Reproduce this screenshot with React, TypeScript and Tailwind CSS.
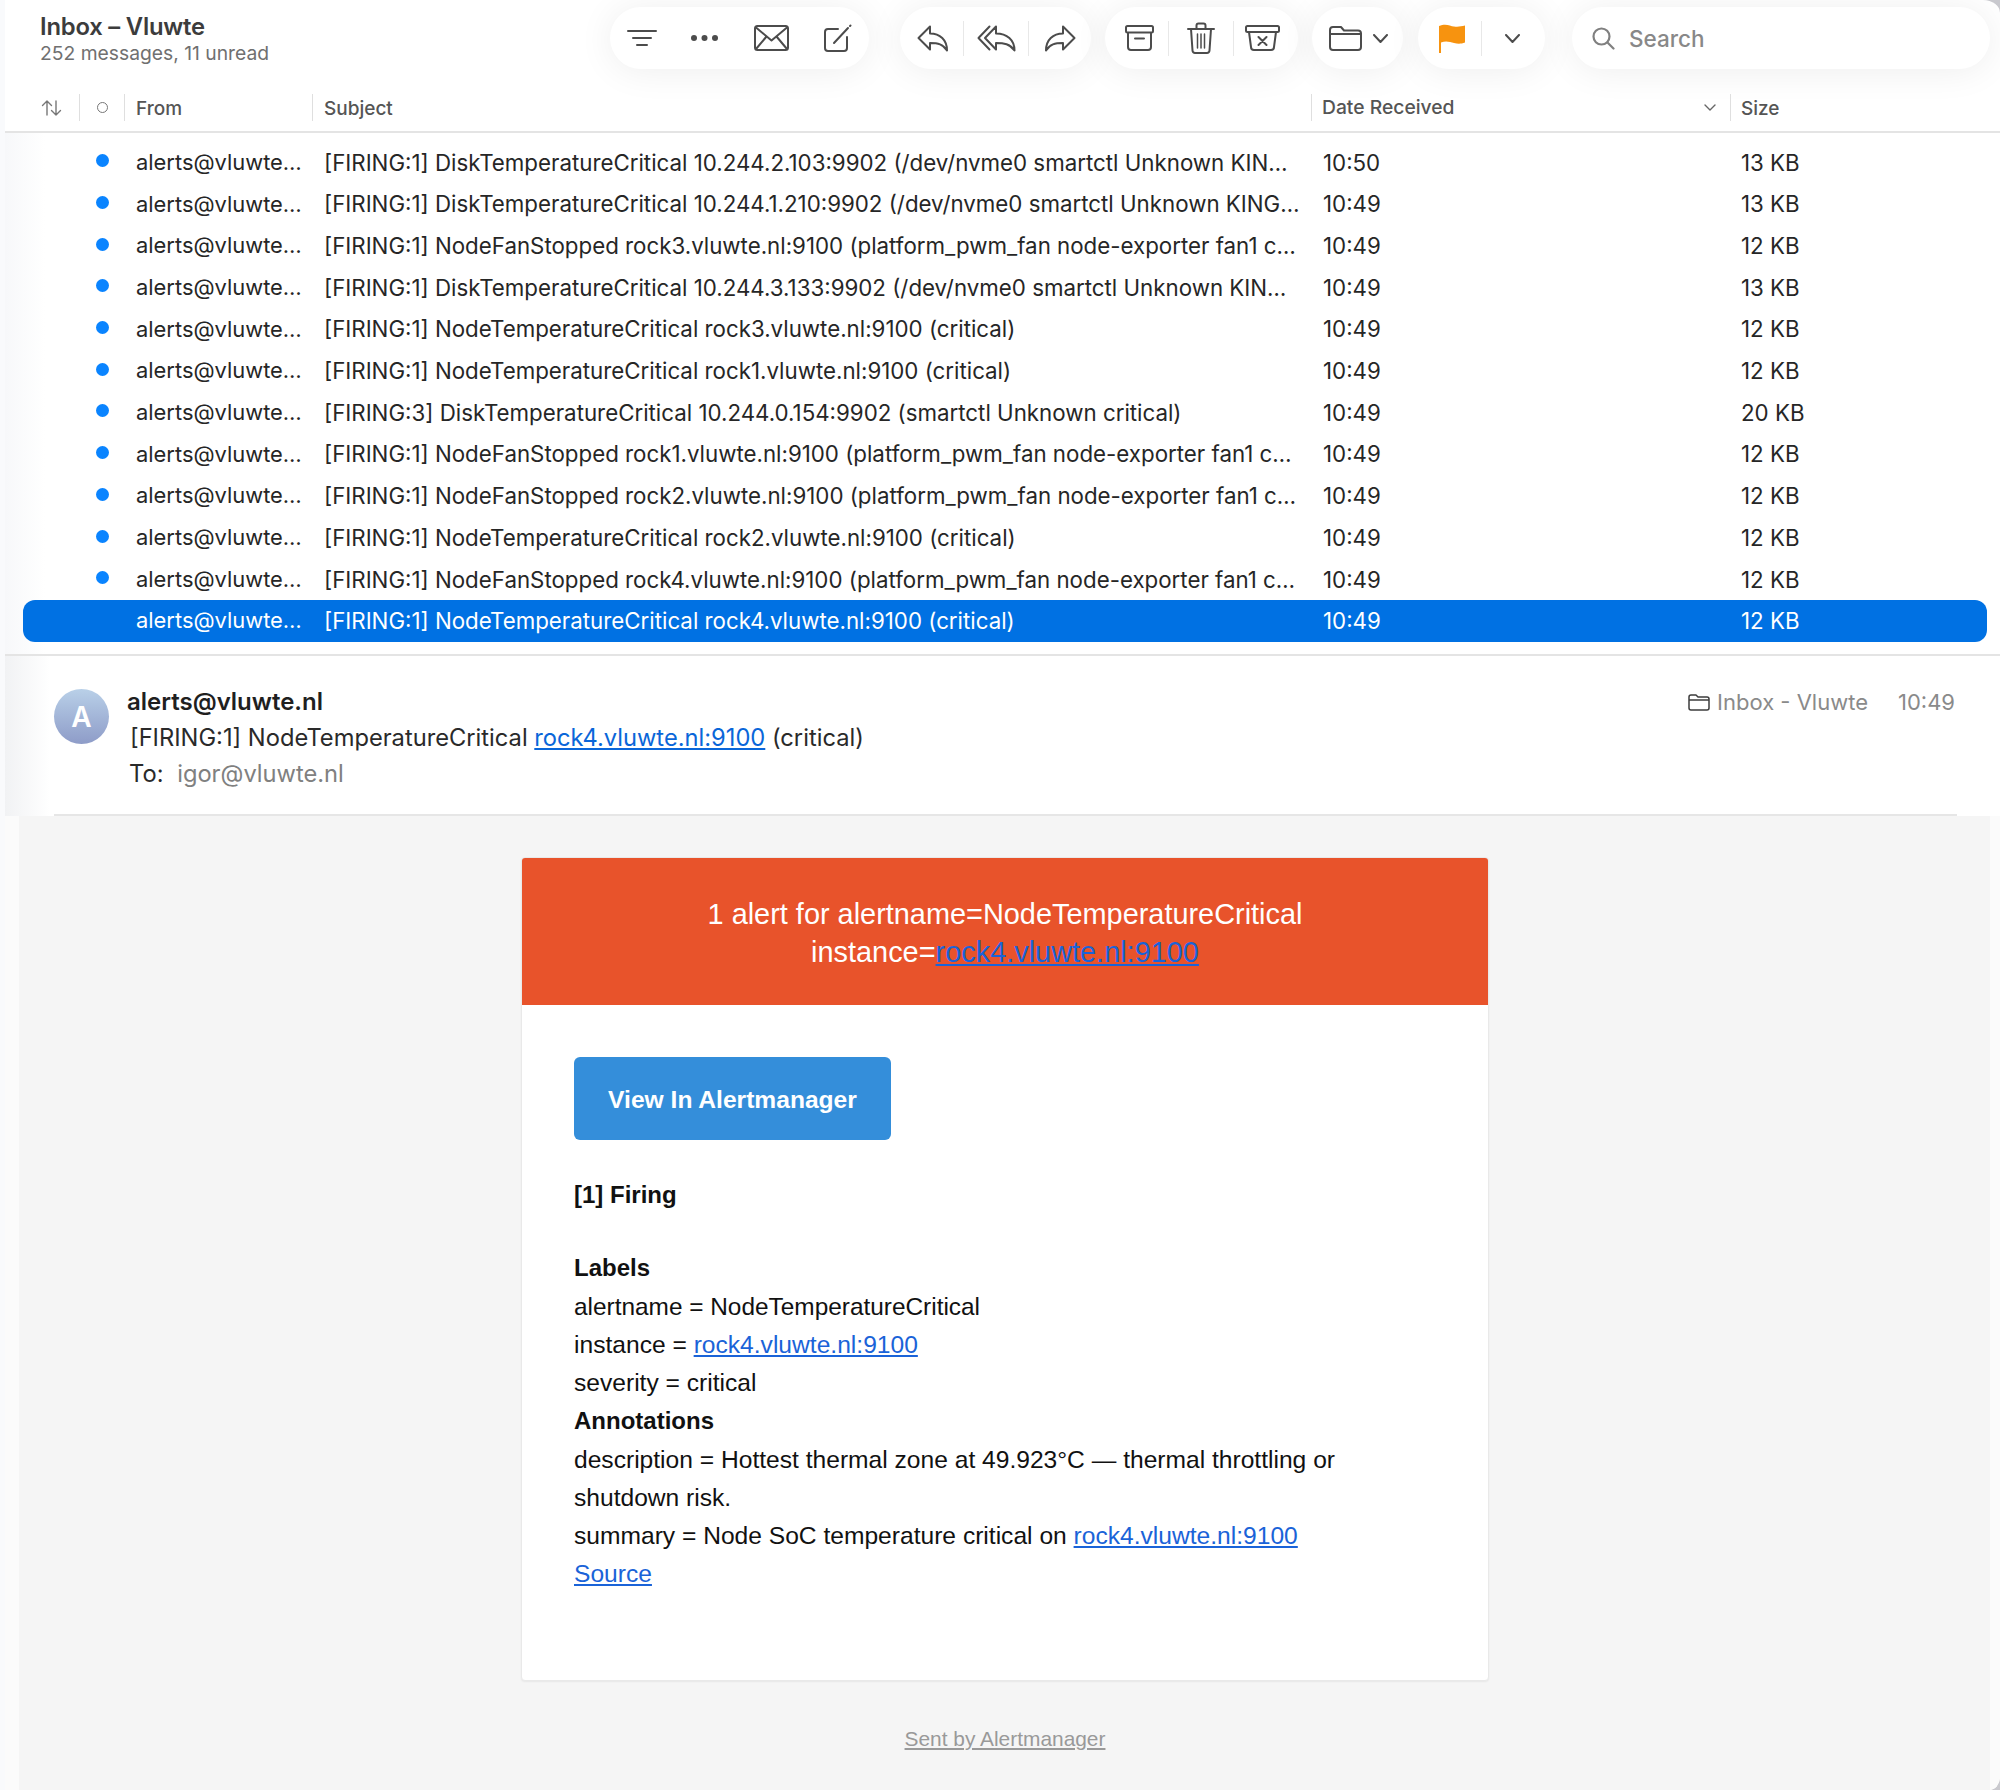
import { FC, ReactNode } from "react";

const rows = [
  { subject: "[FIRING:1] DiskTemperatureCritical 10.244.2.103:9902 (/dev/nvme0 smartctl Unknown KIN…", time: "10:50", size: "13 KB" },
  { subject: "[FIRING:1] DiskTemperatureCritical 10.244.1.210:9902 (/dev/nvme0 smartctl Unknown KING…", time: "10:49", size: "13 KB" },
  { subject: "[FIRING:1] NodeFanStopped rock3.vluwte.nl:9100 (platform_pwm_fan node-exporter fan1 c…", time: "10:49", size: "12 KB" },
  { subject: "[FIRING:1] DiskTemperatureCritical 10.244.3.133:9902 (/dev/nvme0 smartctl Unknown KIN…", time: "10:49", size: "13 KB" },
  { subject: "[FIRING:1] NodeTemperatureCritical rock3.vluwte.nl:9100 (critical)", time: "10:49", size: "12 KB" },
  { subject: "[FIRING:1] NodeTemperatureCritical rock1.vluwte.nl:9100 (critical)", time: "10:49", size: "12 KB" },
  { subject: "[FIRING:3] DiskTemperatureCritical 10.244.0.154:9902 (smartctl Unknown critical)", time: "10:49", size: "20 KB" },
  { subject: "[FIRING:1] NodeFanStopped rock1.vluwte.nl:9100 (platform_pwm_fan node-exporter fan1 c…", time: "10:49", size: "12 KB" },
  { subject: "[FIRING:1] NodeFanStopped rock2.vluwte.nl:9100 (platform_pwm_fan node-exporter fan1 c…", time: "10:49", size: "12 KB" },
  { subject: "[FIRING:1] NodeTemperatureCritical rock2.vluwte.nl:9100 (critical)", time: "10:49", size: "12 KB" },
  { subject: "[FIRING:1] NodeFanStopped rock4.vluwte.nl:9100 (platform_pwm_fan node-exporter fan1 c…", time: "10:49", size: "12 KB" },
  { subject: "[FIRING:1] NodeTemperatureCritical rock4.vluwte.nl:9100 (critical)", time: "10:49", size: "12 KB", selected: true },
  { subject: "[FIRING:1] NodeFanStopped rock3.vluwte.nl:9100 (platform_pwm_fan node-exporter fan1 c…", time: "10:49", size: "12 KB", read: true },
];

const Icon: FC<{ w: number; h: number; children: ReactNode }> = ({ w, h, children }) => (
  <svg width={w} height={h} viewBox={`0 0 ${w} ${h}`} fill="none" stroke="#4c4c4c" strokeWidth="2" strokeLinecap="round" strokeLinejoin="round">
    {children}
  </svg>
);

const Sep = () => <div className="w-px h-[35px] bg-[#e8e8e8] shrink-0" />;

const Pill: FC<{ className: string; children: ReactNode }> = ({ className, children }) => (
  <div className={`flex items-center h-[62px] bg-white rounded-[31px] shadow-[0_2px_36px_rgba(0,0,0,0.07)] shrink-0 ${className}`}>
    {children}
  </div>
);

const Btn: FC<{ className: string; children: ReactNode }> = ({ className, children }) => (
  <div className={`flex items-center justify-center h-full shrink-0 ${className}`}>{children}</div>
);

const Chevron = () => (
  <Icon w={15} h={9}>
    <path d="M1 1l6.5 7L14 1" />
  </Icon>
);

const Link: FC<{ children: ReactNode }> = ({ children }) => (
  <span className="text-[#1a63d8] underline">{children}</span>
);

const Toolbar = () => (
  <div className="flex h-[90px] pt-[7px] items-start">
    <div className="w-[605px] shrink-0 pl-[35px] pt-[7px] font-['Inter',sans-serif]">
      <div className="text-[23.8px] leading-[26px] font-semibold text-[#3c3c3c] tracking-[-0.2px]">Inbox – Vluwte</div>
      <div className="text-[19.3px] leading-[26px] text-[#707070]">252 messages, 11 unread</div>
    </div>

    <Pill className="w-[259px]">
      <Btn className="w-[63px]">
        <Icon w={30} h={18}>
          <path d="M1 2h28M6 9h18M10 16h10" />
        </Icon>
      </Btn>
      <Btn className="w-[63px]">
        <svg width="27" height="6" viewBox="0 0 27 6" fill="#4c4c4c">
          <circle cx="3" cy="3" r="3" />
          <circle cx="13.5" cy="3" r="3" />
          <circle cx="24" cy="3" r="3" />
        </svg>
      </Btn>
      <Btn className="w-[70px]">
        <Icon w={35} h={26}>
          <rect x="1" y="1" width="33" height="24" rx="2.5" />
          <path d="M2 2.5l15.5 13L33 2.5M2 24l10.5-12.5M33 24L22.5 11.500" />
        </Icon>
      </Btn>
      <Btn className="w-[63px]">
        <Icon w={29} h={29}>
          <path d="M15 5H5a3 3 0 0 0-3 3v16a3 3 0 0 0 3 3h16a3 3 0 0 0 3-3V13" />
          <path d="M11 19L25 4" />
          <path d="M27 2l.5-.5" />
        </Icon>
      </Btn>
    </Pill>

    <Pill className="w-[191px] ml-[31px]">
      <Btn className="w-[63px] pl-[3px]">
        <Icon w={32} h={27}>
          <path d="M13 1.500L1.500 13 13 24.500V18c8 0 13 1 17 7.500C30 15 23 8.500 13 8.500z" />
        </Icon>
      </Btn>
      <Sep />
      <Btn className="w-[64px]">
        <Icon w={39} h={27}>
          <path d="M19 1.500L8 13l11 11.500V18c8 0 14 1 18.500 7.500C37.500 15 30 8.500 19 8.500z" />
          <path d="M12.500 1.500L1.500 13l11 11.500" />
        </Icon>
      </Btn>
      <Sep />
      <Btn className="w-[62px]">
        <Icon w={32} h={27}>
          <path d="M19 1.500L30.500 13 19 24.500V18c-8 0-13 1-17 7.500C2 15 9 8.500 19 8.500z" />
        </Icon>
      </Btn>
    </Pill>

    <Pill className="w-[193px] ml-[14px]">
      <Btn className="w-[63px] pl-[5px]">
        <Icon w={29} h={26}>
          <rect x="1" y="1" width="27" height="6.500" rx="1.500" />
          <path d="M3 8v14a3 3 0 0 0 3 3h17a3 3 0 0 0 3-3V8M10 13.500h9" />
        </Icon>
      </Btn>
      <Sep />
      <Btn className="w-[64px]">
        <Icon w={28} h={32}>
          <path d="M1 7h26M9.500 7V3.500a2 2 0 0 1 2-2h5a2 2 0 0 1 2 2V7" />
          <path d="M4 7l1.500 21.500a2.500 2.500 0 0 0 2.500 2.500h12a2.500 2.500 0 0 0 2.500-2.500L24 7" />
          <path d="M10.500 12v14M14 12v14M17.500 12v14" strokeWidth="1.500" />
        </Icon>
      </Btn>
      <Sep />
      <Btn className="w-[64px] pr-[7px]">
        <Icon w={35} h={26}>
          <rect x="1" y="1" width="33" height="6" rx="1.500" />
          <path d="M4 7l2 15a3 3 0 0 0 3 3h17a3 3 0 0 0 3-3l2-15M13.500 12l8 8M21.500 12l-8 8" />
        </Icon>
      </Btn>
    </Pill>

    <Pill className="w-[91px] ml-[14px] pl-[17px] gap-[11px]">
      <Icon w={33} h={26}>
        <path d="M1 5a3 3 0 0 1 3-3h8l3 3.500h14a3 3 0 0 1 3 3V22a3 3 0 0 1-3 3H4a3 3 0 0 1-3-3z" />
        <path d="M2 9h30" />
      </Icon>
      <Chevron />
    </Pill>

    <Pill className="w-[127px] ml-[15px]">
      <Btn className="w-[63px] pl-[5px]">
        <svg width="26" height="29" viewBox="0 0 26 29" fill="#f7930f">
          <path d="M0 2c7-3 11 0 15 .5 4 .5 7 0 11-1v17c-4 1.500-7 1.500-11 .5-4-1-8-2.500-13-.5V29H0z" />
        </svg>
      </Btn>
      <Sep />
      <Btn className="w-[63px] pr-[2px]">
        <Chevron />
      </Btn>
    </Pill>

    <div className="flex items-center h-[62px] w-[418px] ml-[27px] pl-[20px] bg-white rounded-[31px] shadow-[0_2px_36px_rgba(0,0,0,0.07)] shrink-0">
      <svg width="23" height="23" viewBox="0 0 23 23" fill="none" stroke="#808080" strokeWidth="2.200" strokeLinecap="round">
        <circle cx="9.500" cy="9.500" r="8" />
        <path d="M15.500 15.500L21.500 21.500" />
      </svg>
      <span className="ml-[14px] mt-[1px] font-['Inter',sans-serif] text-[22.500px] font-medium text-[#888888]">Search</span>
    </div>
  </div>
);

const ColumnHeader = () => (
  <div className="flex h-[43px] pt-[4px] items-start border-b-2 border-[#e4e4e4] font-['Inter',sans-serif] text-[19px] font-medium text-[#555555]">
    <div className="w-[74px] h-[27px] pl-[36px] flex items-center">
      <svg width="21" height="16" viewBox="0 0 21 16" fill="none" stroke="#777777" strokeWidth="1.400" strokeLinecap="round" strokeLinejoin="round">
        <path d="M6 15V1M1.500 5.500L6 1l4.500 4.500M15 1v14M10.500 10.500L15 15l4.500-4.500" />
      </svg>
    </div>
    <div className="w-[45px] h-[27px] border-l border-[#dfdfdf] flex items-center justify-center">
      <div className="w-[11px] h-[11px] rounded-full border-[1.5px] border-[#777777]" />
    </div>
    <div className="w-[188px] h-[27px] leading-[29px] border-l border-[#dfdfdf] pl-[11px]">From</div>
    <div className="w-[999px] h-[27px] leading-[29px] border-l border-[#dfdfdf] pl-[11px]">Subject</div>
    <div className="w-[419px] h-[27px] leading-[29px] border-l border-[#dfdfdf] pl-[10px] pr-[14px] flex items-center justify-between">
      <span className="text-[19.3px]">Date Received</span>
      <svg width="12" height="7" viewBox="0 0 12 7" fill="none" stroke="#666666" strokeWidth="1.400" strokeLinecap="round" strokeLinejoin="round">
        <path d="M1 1l5 5 5-5" />
      </svg>
    </div>
    <div className="h-[27px] leading-[29px] border-l border-[#dfdfdf] pl-[10px]">Size</div>
  </div>
);

const MessageList = () => (
  <div className="relative h-[521px] pt-[8.500px] overflow-hidden font-['Inter',sans-serif] text-[22.300px] text-[#262626]">
    <div className="absolute inset-y-0 left-0 w-[40px] bg-linear-to-r from-[#f7f8fa] to-transparent pointer-events-none" />
    {rows.map((row, i) => (
      <div
        key={i}
        className={`relative flex items-center h-[41.7px] ml-[18px] w-[1964px] whitespace-nowrap rounded-[12px] ${row.selected ? "bg-[#0071e3] text-white" : ""} ${row.read ? "pt-[4px]" : ""}`}
      >
        <div className="w-[113px] shrink-0">
          {!row.selected && !row.read && (
            <div className="ml-[73px] mb-[3px] w-[13px] h-[13px] rounded-full bg-[#0a84ff]" />
          )}
        </div>
        <div className="w-[188px] shrink-0 text-[21.900px]">alerts@vluwte…</div>
        <div className="w-[998px] shrink-0 overflow-hidden">{row.subject}</div>
        <div className="w-[419px] shrink-0 pl-[1px]">{row.time}</div>
        <div>{row.size}</div>
      </div>
    ))}
  </div>
);

const MessageHeader = () => (
  <div className="relative border-t-2 border-[#e4e4e4]">
    <div className="flex h-[158px] pl-[49px] pt-[28px] pr-[45px] font-['Inter',sans-serif] text-[23.700px] leading-[36px]">
      <div className="mt-[5px] w-[55px] h-[55px] rounded-full bg-linear-to-b from-[#b9d0e8] to-[#8e9cc8] flex items-center justify-center text-white text-[28px] font-semibold shrink-0">
        A
      </div>
      <div className="ml-[18px]">
        <div className="font-semibold text-[24px] text-[#1f1f1f]">alerts@vluwte.nl</div>
        <div className="ml-[3px] text-[#2a2a2a]">
          [FIRING:1] NodeTemperatureCritical <span className="text-[#0a66d9] underline">rock4.vluwte.nl:9100</span> (critical)
        </div>
        <div className="ml-[2px] text-[#2a2a2a]">
          To: <span className="ml-[7px] text-[#808080]">igor@vluwte.nl</span>
        </div>
      </div>
      <div className="ml-auto flex items-start text-[22px] text-[#8a8a8a]">
        <div className="flex items-center h-[36px]">
          <svg width="22" height="17" viewBox="0 0 22 17" fill="none" stroke="#3c3c3c" strokeWidth="1.500" strokeLinejoin="round">
            <path d="M1 3a2 2 0 0 1 2-2h5l2 2h9a2 2 0 0 1 2 2v9a2 2 0 0 1-2 2H3a2 2 0 0 1-2-2z" />
            <path d="M1 6h20" />
          </svg>
          <span className="ml-[7px]">Inbox - Vluwte</span>
          <span className="ml-[30px]">10:49</span>
        </div>
      </div>
    </div>
    <div className="ml-[49px] w-[1903px] h-[2px] bg-[#e6e6e6]" />
    <div className="absolute inset-y-0 left-0 w-[45px] bg-linear-to-r from-[#f1f2f4] to-transparent pointer-events-none" />
  </div>
);

const EmailBody = () => (
  <div className="bg-[#fbfbfb] pl-[14px]">
    <div className="w-[1971px] h-[1000px] bg-[#f5f5f5] pt-[41px] font-['Liberation_Sans',sans-serif] text-[24.600px] leading-[38.27px] text-[#111111]">
      <div className="ml-[502px] w-[968px] bg-white border border-[#e9e9e9] rounded-[4px] overflow-hidden shadow-[0_1px_2px_rgba(0,0,0,0.06)]">
        <div className="h-[147px] bg-[#e8532b] pt-[37px] text-center text-white text-[28.900px]">
          1 alert for alertname=NodeTemperatureCritical
          <br />
          instance=<Link>rock4.vluwte.nl:9100</Link>
        </div>
        <div className="px-[52px] pt-[52px] pb-[86px]">
          <div className="w-[317px] h-[83px] pt-[3px] bg-[#348eda] rounded-[6px] flex items-center justify-center text-white font-bold">
            View In Alertmanager
          </div>
          <div className="mt-[36px] font-bold text-[24px]">[1] Firing</div>
          <div className="mt-[35px] font-bold text-[24px]">Labels</div>
          <div className="text-[24.400px]">alertname = NodeTemperatureCritical</div>
          <div>
            instance = <Link>rock4.vluwte.nl:9100</Link>
          </div>
          <div>severity = critical</div>
          <div className="font-bold text-[24px]">Annotations</div>
          <div className="max-w-[790px]">description = Hottest thermal zone at 49.923°C — thermal throttling or shutdown risk.</div>
          <div>
            summary = Node SoC temperature critical on <Link>rock4.vluwte.nl:9100</Link>
          </div>
          <div>
            <Link>Source</Link>
          </div>
        </div>
      </div>
      <div className="ml-[502px] w-[968px] mt-[39px] text-center text-[20.900px] leading-[38px] text-[#999999] underline">
        Sent by Alertmanager
      </div>
    </div>
  </div>
);

export default function App() {
  return (
    <div className="flex w-[2000px] h-[1790px] overflow-hidden bg-[#c9c9ce]">
      <div className="w-[5px] shrink-0 bg-[#f9fafc]" />
      <div className="w-[1995px] bg-white overflow-hidden rounded-tr-[17px_13px] rounded-br-[11px_13px]">
        <Toolbar />
        <ColumnHeader />
        <MessageList />
        <MessageHeader />
        <EmailBody />
      </div>
    </div>
  );
}
